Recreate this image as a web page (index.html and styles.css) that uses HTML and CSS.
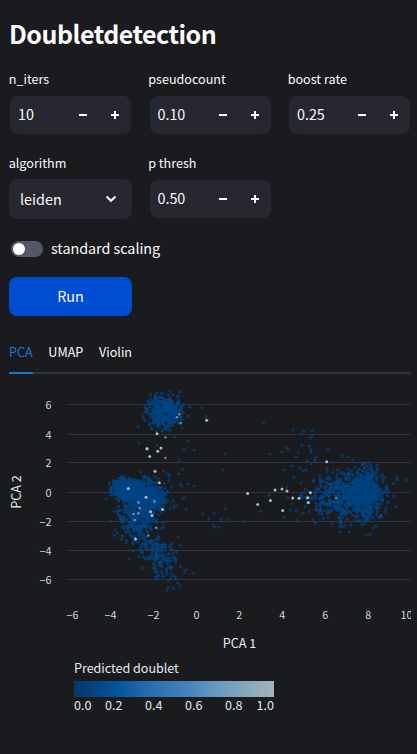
FILE: index.html
```html
<!DOCTYPE html>
<html lang="en">
<head>
<meta charset="utf-8">
<title>Doubletdetection</title>
<link rel="stylesheet" href="styles.css">
</head>
<body>
<main class="panel">
  <h1 class="title">Doubletdetection</h1>
  <div class="fields">
    <div class="field">
      <label class="label">n_iters</label>
      <div class="number"><span class="value">10</span><button class="step" aria-label="decrease"><i class="minus"></i></button><button class="step" aria-label="increase"><i class="plus"></i></button></div>
    </div>
    <div class="field">
      <label class="label">pseudocount</label>
      <div class="number"><span class="value">0.10</span><button class="step" aria-label="decrease"><i class="minus"></i></button><button class="step" aria-label="increase"><i class="plus"></i></button></div>
    </div>
    <div class="field">
      <label class="label">boost rate</label>
      <div class="number"><span class="value">0.25</span><button class="step" aria-label="decrease"><i class="minus"></i></button><button class="step" aria-label="increase"><i class="plus"></i></button></div>
    </div>
    <div class="field">
      <label class="label">algorithm</label>
      <div class="select"><span>leiden</span><svg class="chevron" width="12" height="8" viewBox="0 0 12 8"><path d="M1.500 1.500 6 5.800 10.500 1.500" fill="none" stroke="#fafafa" stroke-width="2.100"/></svg></div>
    </div>
    <div class="field">
      <label class="label">p thresh</label>
      <div class="number"><span class="value">0.50</span><button class="step" aria-label="decrease"><i class="minus"></i></button><button class="step" aria-label="increase"><i class="plus"></i></button></div>
    </div>
  </div>
  <div class="toggle"><span class="track"><span class="thumb"></span></span><span class="toggle-label">standard scaling</span></div>
  <button class="run">Run</button>
  <nav class="tabs"><a class="tab active">PCA</a><a class="tab">UMAP</a><a class="tab">Violin</a></nav>
  <svg class="chart" width="402" height="280" viewBox="9 374 402 280">
    <g class="grid" id="grid"></g>
    <g class="cells" id="cells"></g>
    <g class="doublets" id="doublets"></g>
    <g class="ticks" id="ticks"></g>
    <text class="axis" x="239.500" y="648">PCA 1</text>
    <text class="axis" transform="translate(21 492) rotate(-90)">PCA 2</text>
  </svg>
  <section class="legend">
    <div class="legend-title">Predicted doublet</div>
    <div class="ramp"></div>
    <div class="scale"><span>0.0</span><span>0.2</span><span>0.4</span><span>0.6</span><span>0.8</span><span>1.0</span></div>
  </section>
</main>
<script src="chart.js"></script>
</body>
</html>
```
FILE: styles.css
```css
* { box-sizing: border-box; }
body {
  margin: 0;
  background: #1a1b1e;
  color: #fafafa;
  font: 14.4px/20px "Noto Sans CJK SC", "Open Sans", sans-serif;
}
.panel { height: 754px; padding: 16px 6px 0 9px; overflow: hidden; }
.title { margin: 0 0 21px; font-size: 25px; line-height: 34px; font-weight: 700; letter-spacing: -0.5px; }
.fields { display: grid; grid-template-columns: 123px 123px 123px; column-gap: 16.5px; }
.field { height: 84px; }
.label { display: block; height: 24px; margin-left: -0.3px; font-size: 12.6px; line-height: 16px; }
.number { display: flex; align-items: center; height: 38px; margin: 1px; padding-left: 7.9px; background: #262730; border-radius: 8px; }
.value { flex: 1; padding-bottom: 2px; }
.step { display: flex; align-items: center; justify-content: center; width: 32px; height: 38px; padding: 0; border: 0; background: none; }
.minus, .plus { display: block; width: 8px; height: 8px; background: linear-gradient(#fff, #fff) center / 8px 2px no-repeat; }
.plus { background: linear-gradient(#fff, #fff) center / 8px 2px no-repeat, linear-gradient(#fff, #fff) center / 2px 8px no-repeat; }
.select { display: flex; align-items: center; justify-content: space-between; height: 40px; padding: 0 15px 0 11px; background: #262730; border-radius: 8px; }
.toggle { display: flex; align-items: center; gap: 8px; height: 20px; margin: 0 0 18px 2px; }
.toggle-label { padding-bottom: 2px; letter-spacing: -0.05px; }
.track { width: 32px; height: 16px; padding: 2px; border-radius: 8px; background: #555867; }
.thumb { display: block; width: 12px; height: 12px; border-radius: 50%; background: #fff; }
.run { display: block; width: 123px; height: 39px; padding: 0 0 2px; border: 0; border-radius: 8px; background: #004dd1; color: #fafafa; font: inherit; }
.tabs { display: flex; gap: 15.7px; height: 40px; margin-top: 18px; font-size: 12.6px; line-height: 35px; border-bottom: 2px solid #31333b; }
.tab { height: 40px; }
.active { color: #1c77d4; border-bottom: 2px solid #1c77d4; }
.chart { display: block; }
.grid { stroke: #31333f; stroke-width: 1; }
.cells { fill: #004585; fill-opacity: .74; }
.doublets { fill: #b9c2c8; fill-opacity: .95; }
.ticks { fill: #d5d6d9; font-size: 10.8px; }
.axis { fill: #e6eaf1; font-size: 12.6px; text-anchor: middle; }
.legend { width: 200px; margin-left: 65px; padding-top: 4px; color: #e6eaf1; font-size: 12.6px; }
.legend-title { height: 23px; line-height: 20px; letter-spacing: -0.04px; }
.ramp { height: 16px; background: linear-gradient(90deg, #083666, #04519a 20%, #2d70b2 40%, #4b86bd 60%, #6499c1 70%, #86a8b9 86%, #a5b2b8); }
.scale { display: grid; grid-template-columns: 31px 40px 40px 40px 31.4px 18px; line-height: 16px; white-space: nowrap; }
```
FILE: chart.js
```javascript
const NS = "http://www.w3.org/2000/svg";
function add(parent, tag, attrs, text) {
  const node = document.createElementNS(NS, tag);
  for (const key in attrs) node.setAttribute(key, attrs[key]);
  if (text) node.textContent = text;
  document.getElementById(parent).appendChild(node);
}

let seed = 20417;
function random() {
  seed = (seed + 0x6d2b79f5) | 0;
  let t = Math.imul(seed ^ (seed >>> 15), 1 | seed);
  t = (t + Math.imul(t ^ (t >>> 7), 61 | t)) ^ t;
  return (((t ^ (t >>> 14)) >>> 0) + 0.5) / 4294967296;
}
function gauss() {
  return Math.sqrt(-2 * Math.log(random())) * Math.cos(2 * Math.PI * random());
}
function dot(x, y) { add("cells", "circle", { cx: x, cy: y, r: 1.55 }); }

// count, centre, spread, rotation in degrees
const clusters = [
  [380, 165, 412, 9.5, 8.5, 0],
  [650, 127, 490, 7.5, 5.5, 15],
  [520, 146, 497, 9, 8, 25],
  [250, 137, 520, 9.5, 11, 45],
  [165, 158, 556, 15, 8.5, 48],
  [50, 152, 505, 14, 16, 0],
  [470, 347, 496, 20, 12, 0],
  [380, 364, 493, 10, 13, 0]
];
for (const [count, cx, cy, sx, sy, deg] of clusters) {
  const a = deg * Math.PI / 180;
  for (let i = 0; i < count; i++) {
    let u = gauss(), v = gauss();
    while (Math.hypot(u, v) > 2.6) { u = gauss(); v = gauss(); }
    u *= sx; v *= sy;
    dot(cx + u * Math.cos(a) - v * Math.sin(a), cy + u * Math.sin(a) + v * Math.cos(a));
  }
}

const strays = [
  [202,408],[206,416.5],[190,407],[139,443],[188,441],[184,450],[194,450],[179,461],[225,454],[183,469],[223,470],
  [168,474],[179,474],[182,486],[188,484],[194,486],[141,472],[155,477],[157,445],[175,437],[188,416],[138,427],
  [178,397],[180,392],[184,498],[183,498.5],[186,509],[203,514.5],[209,519],[214,513.5],[225.5,508.5],[221,519.5],
  [227,520],[213.5,525],[214.5,527],[219,527.5],[260.5,511],[174,507],[106,499],[111,521],[178,537],[180,545],
  [193,573],[186,570],[178,583],[167,590],[168,587],[129,559],[263.5,422.5],[293,429.5],[304,431.5],[312,430.5],
  [301,434],[312,436],[310,438],[302,445],[309,446],[286,447],[288,449],[282,452],[298,452.5],[311,450],[311,452],
  [328,450],[270,454],[296,457],[316,457],[315,460],[307,461],[311,464],[342,456],[348,457],[353,460],[332,462],
  [292,466],[284,470],[300,468],[303,471],[306,470],[327,468],[294,477],[301,483],[287,487],[269,495],[244,521],
  [284,517],[297,520],[370,464],[378,469],[382,475],[397,478],[397,480],[406,480],[394,496],[396,507],[376,526],
  [373,528],[370,534.5],[366,535],[340,532],[349,532],[345,526],[351,525],[288,498],[292,504],[296,511],[290,510],
  [303,513],[315,523],[313,520]
];
for (const [x, y] of strays) dot(x, y);

const doublets = [
  [206.7,420.3],[157,433.7],[147,448.8],[147,448.8],[161,448],[157.7,451.3],[149.7,456.6],[155,471.3],[159.3,482.7],
  [128.3,488.5],[146,497.3],[162.5,509.4],[150.6,511.7],[152,515.6],[135.5,539],[247.6,493.4],[257.7,504.4],
  [270.4,500.4],[275,490],[282,489],[287,491],[292.7,498],[299,498.3],[307.7,497.7],[310.4,492.7],[308.4,502.6],
  [282.7,510.4],[326.7,461.7]
];
for (const [x, y] of doublets) add("doublets", "circle", { cx: x, cy: y, r: 1.5 });
const partial = [
  [179.3,414.5],[177,417.3],[180.7,423.3],[165.3,437.3],[165.3,458],[154.4,501.4],[138.6,502.4],[139.7,508.3],
  [133.6,514],[138.4,513.4],[134.6,520],[156,527.8],[148.4,535.6],[336,498]
];
for (const [x, y] of partial) add("doublets", "circle", { cx: x, cy: y, r: 1.3, "fill-opacity": 0.6 });

[["6",404.5],["4",434.5],["2",462.5],["0",492.5],["−2",521.5],["−4",550.5],["−6",579.5]].forEach(([label, y]) => {
  add("grid", "line", { x1: 67.5, x2: 411, y1: y, y2: y });
  add("ticks", "text", { x: 51.5, y: y + 4, "text-anchor": "end" }, label);
});
[["−6",72.5],["−4",110.5],["−2",153.5],["0",196.5],["2",239.2],["4",282.2],["6",325.2],["8",368.2],["10",406.5]].forEach(([label, x]) => {
  add("ticks", "text", { x: x, y: 619, "text-anchor": "middle" }, label);
});
```
